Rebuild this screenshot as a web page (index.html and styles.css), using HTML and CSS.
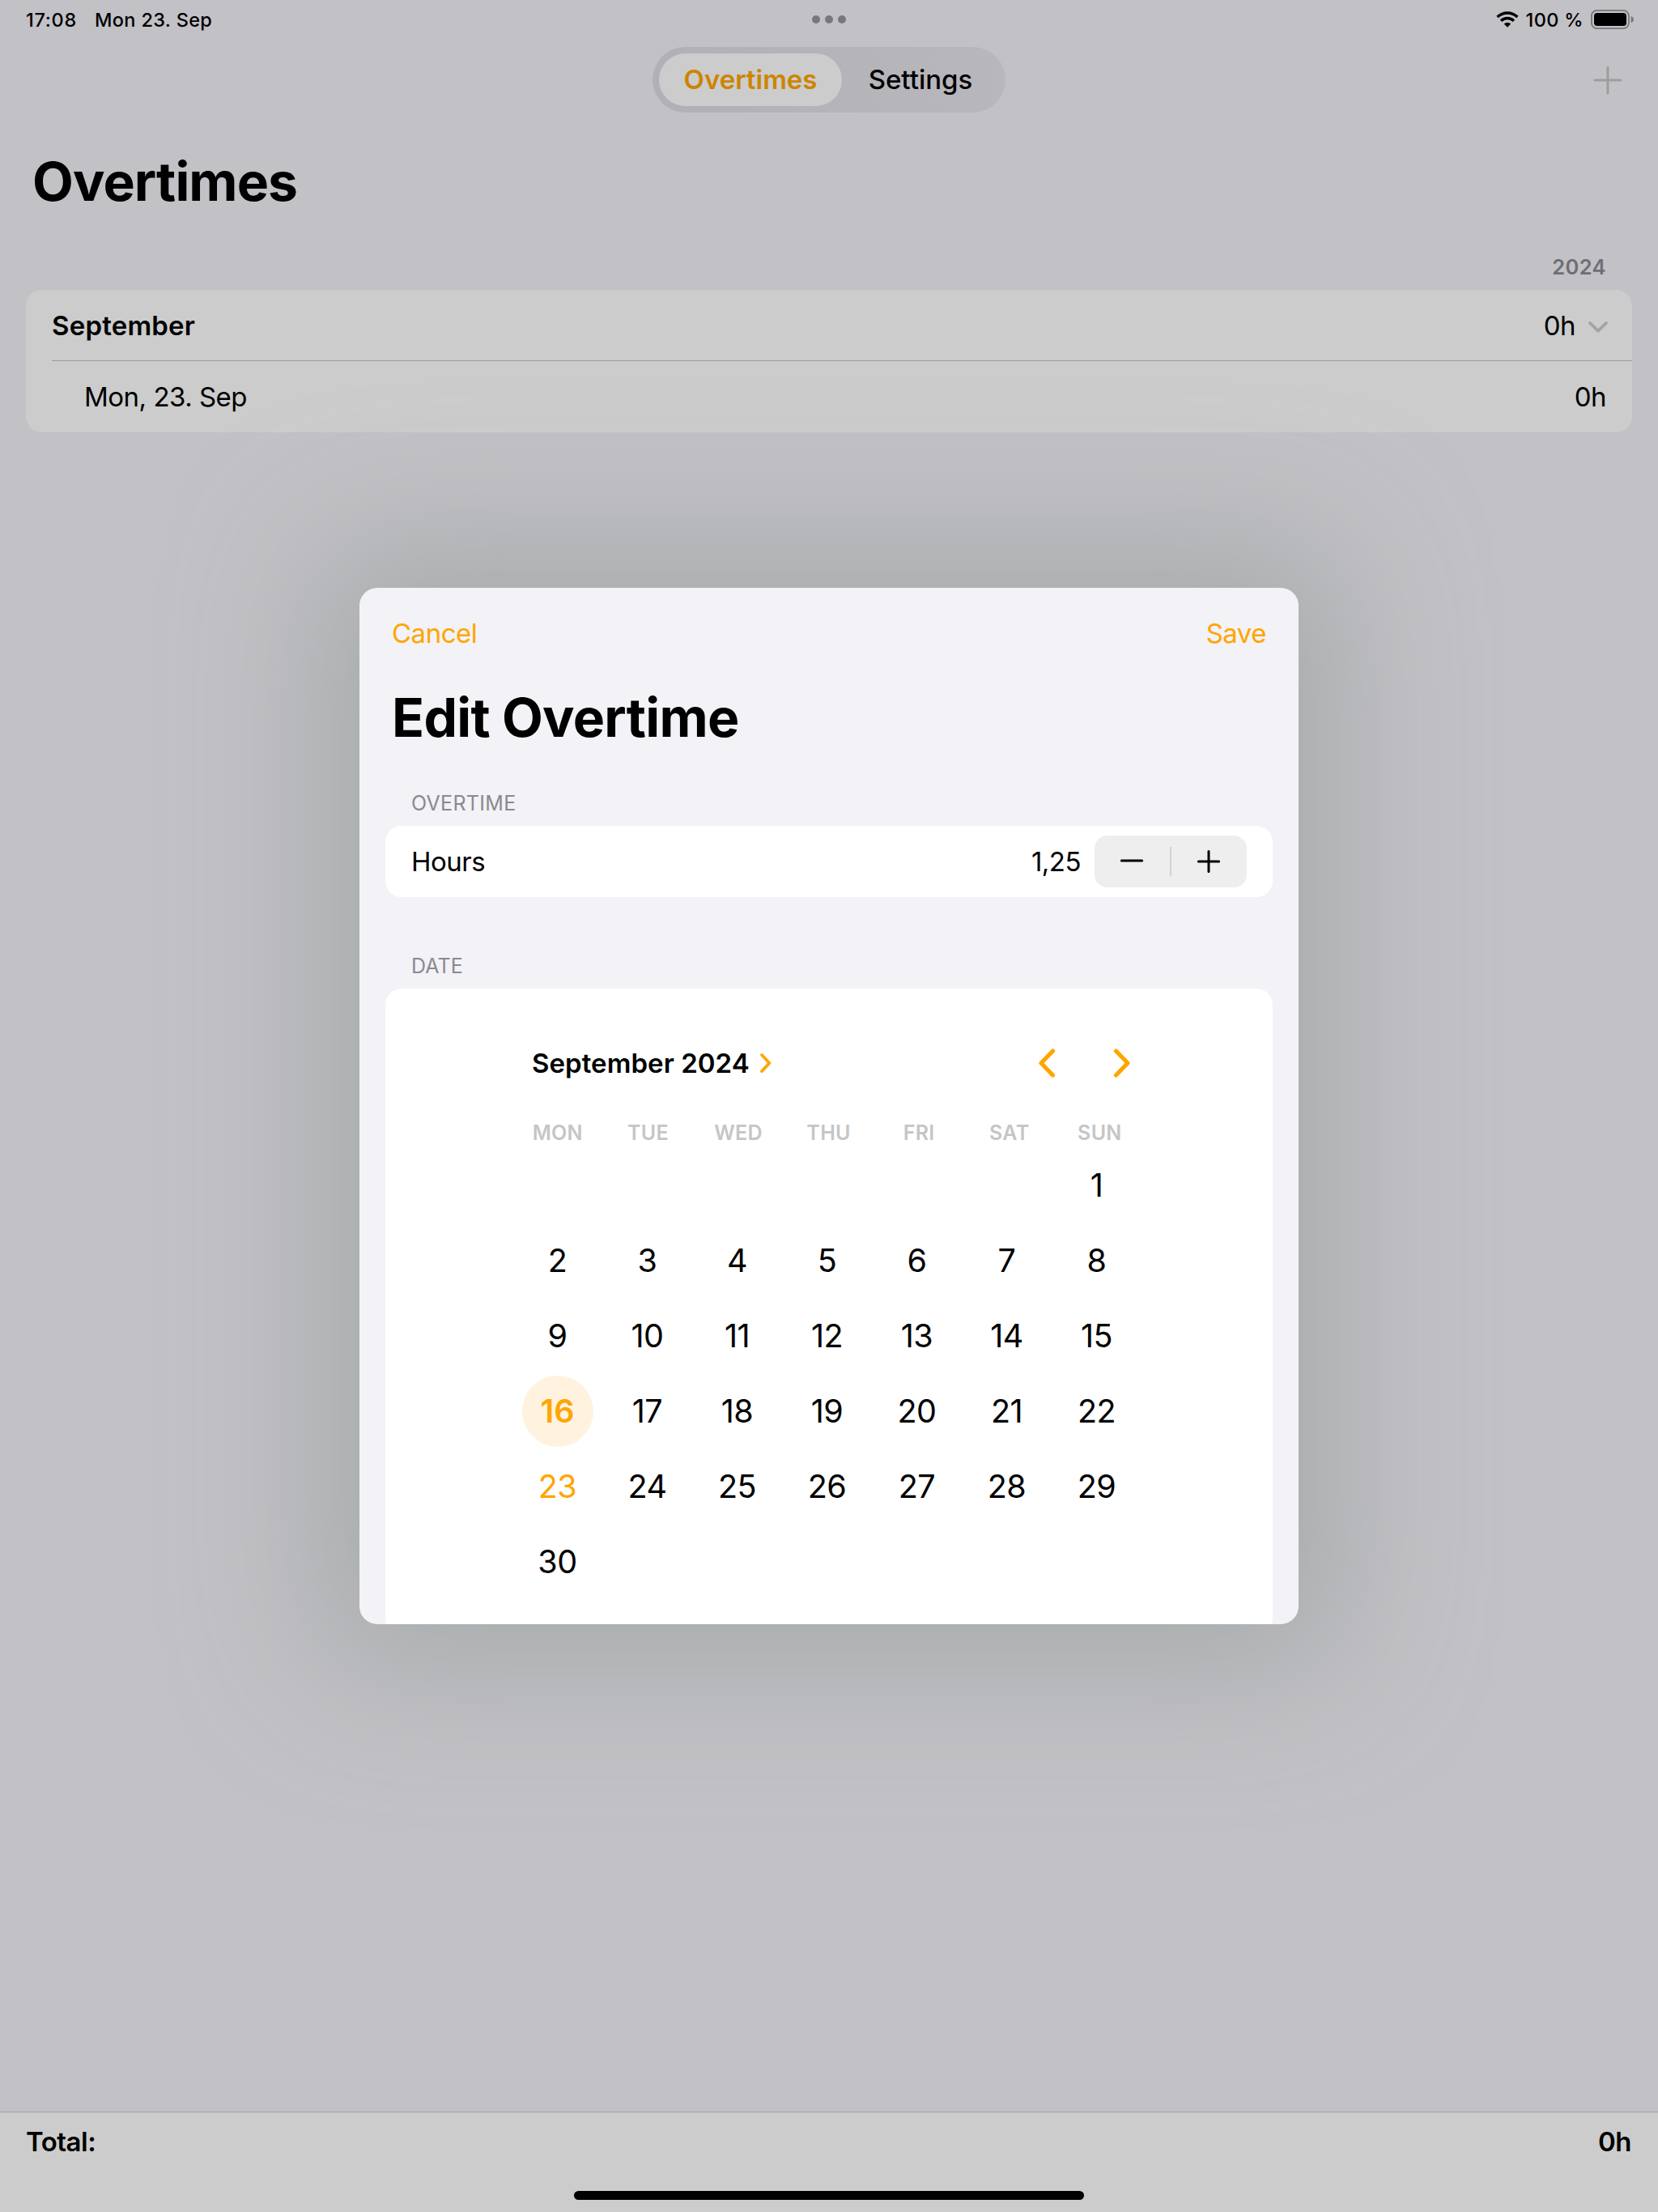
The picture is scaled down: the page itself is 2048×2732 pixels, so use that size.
FILE: index.html
```html
<!DOCTYPE html>
<html lang="en">
<head>
<meta charset="utf-8">
<title>Overtimes</title>
<link rel="stylesheet" href="styles.css">
</head>
<body>
<div class="screen">
  <header class="status">
    <div class="status-left"><span class="time">17:08</span><span class="date">Mon 23. Sep</span></div>
    <div class="dots"><i></i><i></i><i></i></div>
    <div class="status-right">
      <svg class="wifi" width="28" height="20" viewBox="0 0 28 20">
        <path d="M1.6 7A17.6 17.6 0 0 1 26.4 7" fill="none" stroke="#000" stroke-width="3.5"/>
        <path d="M6.1 11.8A11.2 11.2 0 0 1 21.9 11.8" fill="none" stroke="#000" stroke-width="3.4"/>
        <path d="M14 19.8L9.8 15.5A6 6 0 0 1 18.2 15.5Z"/>
      </svg>
      <span class="percent">100 %</span>
      <svg class="battery" width="54" height="24" viewBox="0 0 54 24">
        <rect x=".9" y=".9" width="46" height="22.2" rx="6.5" fill="none" stroke="#78777c" stroke-width="1.8"/>
        <rect x="4" y="4" width="40" height="16" rx="3.8"/>
        <path d="M49.6 8Q53 9 53 12T49.6 16Z" fill="#78777c"/>
      </svg>
    </div>
  </header>
  <nav class="nav">
    <span></span>
    <div class="tabs"><span class="tab active">Overtimes</span><span class="tab">Settings</span></div>
    <svg class="add" width="36" height="36" viewBox="0 0 36 36"><path d="M2 18H34M18 2V34" stroke="#9d9da0" stroke-width="3" stroke-linecap="round"/></svg>
  </nav>
  <h1 class="page-title">Overtimes</h1>
  <div class="year">2024</div>
  <section class="list">
    <div class="row"><b class="month">September</b><span class="value">0h</span><svg class="chev" width="26" height="16" viewBox="0 0 26 16"><path d="M3 3L13 12.6L23 3" fill="none" stroke="#a3a3a4" stroke-width="3.8" stroke-linecap="round" stroke-linejoin="round"/></svg></div>
    <div class="row sub"><span class="day-name">Mon, 23. Sep</span><span class="value">0h</span></div>
  </section>
  <footer class="total">
    <div class="total-row"><span class="total-label">Total:</span><span>0h</span></div>
    <div class="home"></div>
  </footer>

  <div class="modal">
    <div class="modal-bar"><span class="cancel">Cancel</span><span class="save">Save</span></div>
    <h2 class="modal-title">Edit Overtime</h2>
    <div class="label">OVERTIME</div>
    <div class="hours">
      <span class="hours-label">Hours</span><span class="amount">1,25</span>
      <div class="stepper">
        <svg width="30" height="30" viewBox="0 0 30 30"><path d="M2.4 14H27.6" stroke="#000" stroke-width="3" stroke-linecap="round"/></svg>
        <i class="sep"></i>
        <svg width="30" height="30" viewBox="0 0 30 30"><path d="M2.4 15H27.6M15 2.4V27.6" stroke="#000" stroke-width="3" stroke-linecap="round"/></svg>
      </div>
    </div>
    <div class="label label-date">DATE</div>
    <div class="calendar">
      <div class="cal-head">
        <b class="cal-month">September 2024</b>
        <svg class="more" width="16" height="26" viewBox="0 0 16 26"><path d="M3 3L12.4 13L3 23" fill="none" stroke="#ffa500" stroke-width="3.8" stroke-linecap="round" stroke-linejoin="round"/></svg>
        <svg class="prev" width="22" height="36" viewBox="0 0 22 36"><path d="M18.5 3L4 18L18.5 33" fill="none" stroke="#ffa500" stroke-width="5.2" stroke-linecap="round" stroke-linejoin="round"/></svg>
        <svg class="next" width="22" height="36" viewBox="0 0 22 36"><path d="M3.5 3L18 18L3.5 33" fill="none" stroke="#ffa500" stroke-width="5.2" stroke-linecap="round" stroke-linejoin="round"/></svg>
      </div>
      <div class="week"><span>MON</span><span>TUE</span><span>WED</span><span>THU</span><span>FRI</span><span>SAT</span><span>SUN</span></div>
      <div class="days">
        <span class="first">1</span>
        <span>2</span><span>3</span><span>4</span><span>5</span><span>6</span><span>7</span><span>8</span>
        <span>9</span><span>10</span><span>11</span><span>12</span><span>13</span><span>14</span><span>15</span>
        <span class="selected">16</span><span>17</span><span>18</span><span>19</span><span>20</span><span>21</span><span>22</span>
        <span class="today">23</span><span>24</span><span>25</span><span>26</span><span>27</span><span>28</span><span>29</span>
        <span>30</span>
      </div>
    </div>
  </div>
</div>
</body>
</html>
```
FILE: styles.css
```css
* { box-sizing: border-box; }
body { margin: 0; font-family: Inter, "Liberation Sans", sans-serif; font-size: 33px; letter-spacing: -0.5px; color: #000; }
svg { display: block; flex: none; }
h1, h2 { margin: 0; font-weight: 700; font-size: 66px; line-height: 80px; letter-spacing: -0.9px; }
b { font-weight: 600; letter-spacing: 0.05px; }
.screen { position: relative; width: 2048px; height: 2732px; overflow: hidden; background: #c2c1c6; display: flex; flex-direction: column; }

.status { height: 48px; padding: 0 29px; display: grid; grid-template-columns: 1fr auto 1fr; align-items: center; font-size: 23.5px; font-weight: 500; letter-spacing: 0.35px; }
.status-left { display: flex; gap: 22px; padding-left: 3px; }
.time { letter-spacing: 0.7px; }
.dots { display: flex; gap: 6px; }
.dots i { width: 10px; height: 10px; border-radius: 50%; background: #78777c; }
.status-right { display: flex; align-items: center; justify-content: flex-end; }
.percent { margin: 0 9px 0 9px; }

.nav { height: 101px; display: grid; grid-template-columns: 1fr 436px 1fr; align-items: center; }
.tabs { height: 81px; border-radius: 41px; padding: 8px; display: flex; background: linear-gradient(90deg, #b1b0b6, #b8b7bc); font-weight: 500; letter-spacing: 0; }
.tab { width: 194px; display: flex; align-items: center; justify-content: center; padding-bottom: 1px; }
.tab.active { width: 226px; border-radius: 33px; background: #ccc; color: #cc8500; font-weight: 600; }
.add { justify-self: end; margin-right: 44px; }

.page-title { margin: 35px 0 0 40px; }
.year { margin: 50px 64px 0 0; height: 32px; line-height: 32px; text-align: right; font-size: 25.5px; font-weight: 600; color: #6f6f74; letter-spacing: 0.4px; }
.list { margin: 12px 32px 0; height: 176px; border-radius: 20px; background: #ccc; padding-left: 32px; }
.row { height: 88px; display: flex; align-items: center; padding-right: 32px; }
.row:first-child { border-bottom: 1px solid #9c9ca0; padding-right: 29px; }
.row.sub { padding-left: 40px; }
.month { letter-spacing: 0.2px; }
.value { margin-left: auto; }
.chev { margin: 4px 0 0 15px; }

.total { margin-top: auto; height: 124px; border-top: 1px solid #9f9fa3; background: #ccc; font-weight: 600; display: flex; flex-direction: column; align-items: center; }
.total-row { width: 100%; height: 71px; padding: 0 33px 0 32px; display: flex; justify-content: space-between; align-items: center; }
.home { width: 630px; height: 11px; margin-top: 26px; border-radius: 6px; background: #000; }

.modal { position: absolute; left: 444px; top: 726px; width: 1160px; height: 1280px; padding: 0 32px; overflow: hidden; border-radius: 22px; background: #f2f2f7; box-shadow: 0 0 170px 50px rgba(148, 156, 154, 0.6); }
.modal-bar { height: 112px; padding: 0 8px; display: flex; justify-content: space-between; align-items: center; color: #ffa500; }
.modal-title { margin: 8px 0 0 8px; letter-spacing: -0.7px; }
.label { margin: 50px 0 0 32px; height: 32px; line-height: 32px; font-size: 25px; color: #8a8a8e; letter-spacing: 0.3px; }
.hours { margin-top: 12px; height: 88px; border-radius: 20px; background: #fff; padding: 0 32px; display: flex; align-items: center; }
.amount { margin-left: auto; }
.stepper { width: 188px; height: 64px; margin-left: 17px; padding: 0 32px 0 31px; border-radius: 16px; background: #eeeeef; display: flex; align-items: center; justify-content: space-between; }
.sep { width: 2px; height: 36px; background: #d3d3d5; }
.label-date { margin-top: 69px; letter-spacing: 0.1px; }
.calendar { margin-top: 12px; height: 797px; border-radius: 20px; background: #fff; padding-top: 62px; }
.cal-head { height: 60px; display: flex; align-items: center; padding: 0 175px 0 181px; }
.more { margin-left: 12px; }
.prev { margin-left: auto; }
.next { margin-left: 71px; }
.week { margin: 39px 0 0 157px; width: 781px; height: 34px; display: grid; grid-template-columns: repeat(7, 111.6px); align-items: center; text-align: center; font-size: 25px; font-weight: 600; color: #c5c5c7; letter-spacing: 0.3px; }
.days { margin: 1px 0 0 157px; display: grid; grid-template-columns: repeat(7, 111px); grid-auto-rows: 93px; align-items: center; justify-items: center; font-size: 39.5px; letter-spacing: -0.5px; }
.first { grid-column: 7; }
.today { color: #ffa500; }
.selected { width: 88px; height: 88px; border-radius: 50%; background: #fff3e0; color: #ffa500; font-weight: 600; letter-spacing: 0; display: flex; align-items: center; justify-content: center; }
```
